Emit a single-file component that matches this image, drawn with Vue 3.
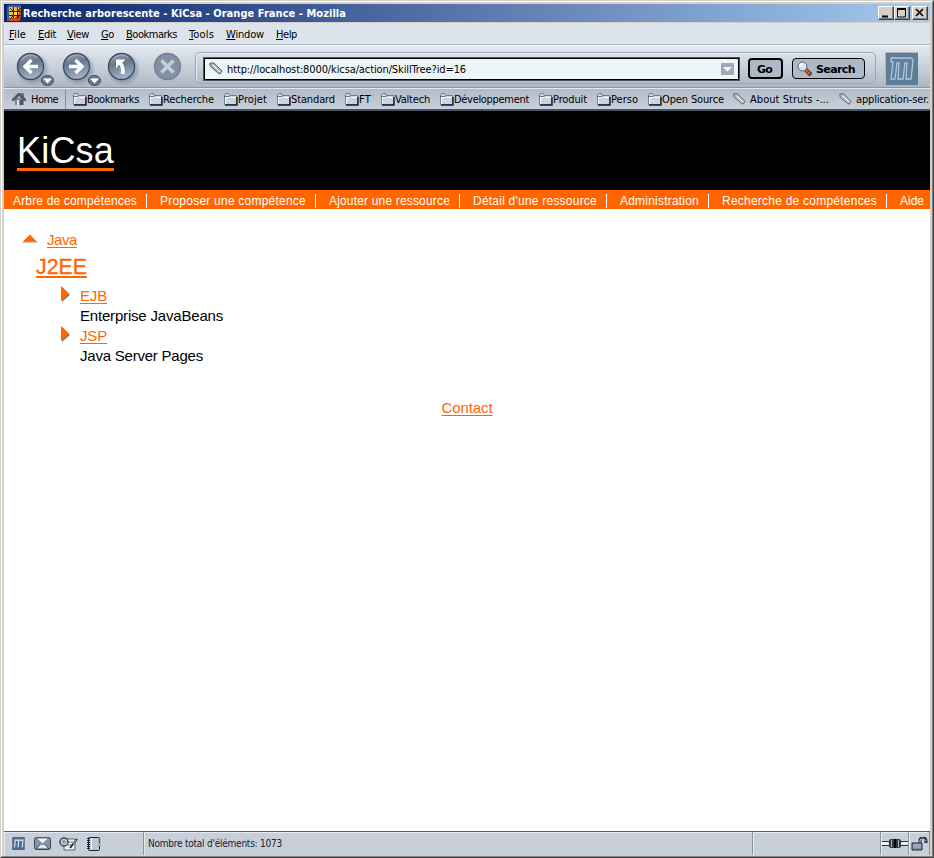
<script setup>
const menus = [
  ['File', 17, 12], ['Edit', 18, 11], ['View', 22, 12], ['Go', 13, 12],
  ['Bookmarks', 51, 12], ['Tools', 25, 12], ['Window', 38, 12], ['Help', 21, 0]
]
const bookmarks = [
  ['Bookmarks', 52], ['Recherche', 51], ['Projet', 29], ['Standard', 44], ['FT', 12],
  ['Valtech', 35], ['Développement', 75], ['Produit', 34], ['Perso', 27], ['Open Source', 62]
]
const pages = [['About Struts -...', 79], ['application-ser.', 73]]
const nav = [
  ['Arbre de compétences', 124], ['Proposer une compétence', 146], ['Ajouter une ressource', 121],
  ['Détail d\'une ressource', 124], ['Administration', 79], ['Recherche de compétences', 155], ['Aide', 24]
]
const skills = [
  { name: 'EJB', width: 27, text: 'Enterprise JavaBeans', textWidth: 143 },
  { name: 'JSP', width: 27, text: 'Java Server Pages', textWidth: 123 }
]
// Spreads the letters of a label over its column width.
const vFit = {
  mounted(el, { value }) {
    const natural = el.getBoundingClientRect().width
    el.style.letterSpacing = (value - natural) / el.textContent.trim().length + 'px'
    el.style.width = value + 'px'
  }
}
</script>

<template>
  <div class="window">
    <div class="frame">
      <header class="title">
        <svg class="logo" width="16" height="16" viewBox="0 0 16 16">
          <path d="M0 2 2 0h12v3H3v11l-1 2H0z" fill="#2a62a8" /><path d="M2 2h12v12l-2 2H2z" fill="#d9481c" />
          <path d="M2 2h10v6l-4 5H2z" fill="#f7b82c" />
          <path d="M6.500 2v12M10.500 2v12M2 6.500h13M2 10.500h13" stroke="#3a2410" fill="none" />
          <path d="m3 3 3 3M14 3l-3 3M3 14l3-3m8 3-3-3" stroke="#3a2410" />
          <path d="M7 7h3v3H7z" fill="#ffe34c" />
        </svg>
        <b v-fit="323" class="fit">Recherche arborescente - KiCsa - Orange France - Mozilla</b>
        <div class="controls">
          <i><svg width="14" height="12"><path d="M3 9.5h6" stroke="#000" stroke-width="2" /></svg></i>
          <i><svg width="14" height="12"><path d="M2.5 2v8h8V2" stroke="#000" fill="none" /><path d="M2 2h9" stroke="#000" stroke-width="2" /></svg></i>
          <i class="close"><svg width="14" height="12"><path d="m3 2 7 7M10 2 3 9" stroke="#000" stroke-width="1.6" /></svg></i>
        </div>
      </header>
      <nav class="menu">
        <span v-for="m in menus" :key="m[0]" v-fit="m[1]" class="fit" :style="{ marginRight: m[2] + 'px' }"><u>{{ m[0][0] }}</u>{{ m[0].slice(1) }}</span>
      </nav>
      <div class="toolbar">
        <svg class="buttons" width="190" height="43" viewBox="4 45 190 43">
          <defs>
            <linearGradient id="ball" x1="0" y1="0" x2="0.25" y2="1"><stop offset="0" stop-color="#97a4b4" /><stop offset=".45" stop-color="#68788c" /><stop offset="1" stop-color="#a0b0c2" /></linearGradient>
            <radialGradient id="shade"><stop offset=".7" stop-color="#65758a" stop-opacity=".45" /><stop offset="1" stop-color="#65758a" stop-opacity="0" /></radialGradient>
          </defs>
          <g v-for="x in [30.5, 76.5, 121.5]" :key="x">
            <circle :cx="x + 2" cy="69" r="17" fill="url(#shade)" />
            <circle :cx="x" cy="66.5" r="13" fill="url(#ball)" stroke="#3c4a60" stroke-width="1.3" />
            <path :d="`M${x - 9} 60a11 11 0 0 1 16 -3`" fill="none" stroke="#c6d0db" stroke-opacity=".6" />
          </g>
          <path d="M38 66.5H26M31.500 60l-6.500 6.500 6.500 6.500M69 66.500h12M75.500 60l6.500 6.500-6.500 6.500" fill="none" stroke="#fff" stroke-width="3.4" />
          <path d="M120 63q4 4 2.500 11" fill="none" stroke="#fff" stroke-width="3.8" />
          <path d="M116 59.500h9.500l-3 3-3.500 2-3 4z" fill="#fff" />
          <circle cx="167.500" cy="66.500" r="13" fill="#8290a3" stroke="#718096" stroke-width="1.3" />
          <path d="m161.500 60.500 12 12m0-12-12 12" stroke="#c5ced9" stroke-width="3.8" />
          <g v-for="x in [47.5, 94.5]" :key="x">
            <ellipse :cx="x" cy="80.500" rx="6" ry="5" fill="#6b7a8e" stroke="#37465b" />
            <path :d="`M${x - 4.5} 78.500h9l-4.500 5z`" fill="#fff" />
          </g>
        </svg>
        <div class="address">
          <div class="url">
            <svg width="14" height="14" viewBox="0 0 14 14"><path d="M1 1h4l8 8-2 3-2-1-8-7z" fill="#aeb7c1" stroke="#56616e" /><path d="m4 3 7 7" stroke="#fff" /></svg>
            <span v-fit="239" class="fit">http://localhost:8000/kicsa/action/SkillTree?id=16</span>
            <svg class="drop" width="13" height="12"><rect width="13" height="12" rx="1" fill="#9caaba" /><path d="M2 4h9L6.500 8.500z" fill="#fff" /></svg>
          </div>
          <button class="go"><span v-fit="15" class="fit">Go</span></button>
          <button class="search">
            <svg width="16" height="16" viewBox="0 0 16 16"><path d="m9 9 5 5" stroke="#74230d" stroke-width="4" /><path d="m9 9 4 4" stroke="#d4623b" stroke-width="2" /><circle cx="5.500" cy="5.500" r="4.500" fill="#d7e4ef" stroke="#546274" /><path d="M3 6q0-3 3-3" stroke="#fff" stroke-width="2" fill="none" /></svg>
            <span v-fit="39" class="fit">Search</span>
          </button>
        </div>
        <svg class="brand" width="33" height="34" viewBox="0 0 33 34">
          <rect width="33" height="34" fill="#adb8c3" /><rect x="1" y="1" width="32" height="32" fill="#617c97" />
          <path d="M6 6h19q3 0 3 3l-2 18h-5l1-16h-2l-2 16h-5l1-16h-2l-2 16H6L8 10H6z" fill="#647f9b" stroke="#adc7df" stroke-width="1.3" />
        </svg>
      </div>
      <div class="bookmarks">
        <div class="home">
          <svg width="15" height="14" viewBox="0 0 15 14"><path d="M9 1h3v5H9z" fill="#697787" /><path d="M3 6h9v7H3z" fill="#7b8897" /><path d="M0 7 6 1h2l6 6v2h-2L7 4 2 9H0z" fill="#4a5b6c" /><path d="M5 8h2v5H5z" fill="#dde4eb" /><path d="M8 8h3v5H8z" fill="#4a5867" /></svg>
          <span v-fit="27" class="fit">Home</span>
        </div>
        <div v-for="b in bookmarks" :key="b[0]" class="bookmark">
          <svg width="15" height="13" viewBox="0 0 15 13"><path d="M1.500 11.500v-10l1-1h3l1 2h7v9z" fill="#cbd2db" stroke="#6f7b8a" /><path d="M14 4v8H2" fill="none" stroke="#152136" stroke-width="1.400" /><path d="M2.500 11V4.500H13" fill="none" stroke="#fff" /><path d="M1 3.500h5l1 1" fill="none" stroke="#65717f" /></svg>
          <span v-fit="b[1]" class="fit">{{ b[0] }}</span>
        </div>
        <div v-for="p in pages" :key="p[0]" class="page-link">
          <svg width="13" height="13" viewBox="0 0 14 14"><path d="M1 1h4l8 8-2 3-2-1-8-7z" fill="#b9c1cb" stroke="#56616e" /><path d="m4 3 7 7" stroke="#fff" /></svg>
          <span v-fit="p[1]" class="fit">{{ p[0] }}</span>
        </div>
      </div>
      <main class="page">
        <div class="banner"><h1 v-fit="97" class="fit">KiCsa</h1></div>
        <nav class="site-nav"><a v-for="n in nav" :key="n[0]"><span v-fit="n[1]" class="fit">{{ n[0] }}</span></a></nav>
        <div class="content">
          <div class="parent">
            <svg width="16" height="12" viewBox="0 0 16 12"><path d="M0 10.500 8 3l8 7.500z" fill="#aaa18c" /><path d="m1 9.500 7-7 6 7z" fill="#f60" /></svg>
            <a v-fit="30" class="fit link">Java</a>
          </div>
          <h2><a v-fit="51" class="fit link">J2EE</a></h2>
          <div v-for="s in skills" :key="s.name" class="skill">
            <svg width="9" height="16" viewBox="0 0 9 16"><path d="M1 1v15l8-7z" fill="#827c75" /><path d="M0 0v15l8-7z" fill="#f60" /></svg>
            <div class="description"><a v-fit="s.width" class="fit link">{{ s.name }}</a><span v-fit="s.textWidth" class="fit">{{ s.text }}</span></div>
          </div>
          <div class="contact"><a v-fit="51" class="fit link">Contact</a></div>
        </div>
      </main>
      <footer class="status">
        <div class="components">
          <svg width="13" height="13" viewBox="0 0 33 34"><rect width="33" height="34" fill="#4d6c8d" /><path d="M6 8h22l-2 19M8 10 6 27M17 10l-2 17" stroke="#e0ebf5" stroke-width="3" fill="none" /></svg>
          <svg width="17" height="13" viewBox="0 0 17 13"><rect x=".5" y=".5" width="16" height="12" rx="2" fill="#8796a6" stroke="#364559" /><path d="m2 1 6.500 6L15 1z" fill="#f1f5f8" stroke="#6c7988" /><path d="M3 11 6 8h5l3 3z" fill="#dce4ec" /><path d="m2 12 4-5m5 0 4 5" stroke="#435165" /></svg>
          <svg width="20" height="14" viewBox="0 0 20 14"><path d="M5 2h11v11H5z" fill="#f4f5f6" stroke="#59636e" /><path d="M9 5h5M9 8h4" stroke="#65717e" /><circle cx="5" cy="5" r="4" fill="#c3cedb" stroke="#35465b" stroke-width="1.500" /><path d="M3 5h4M5 3v4" stroke="#6e7e90" /><path d="m11 11 7-9" stroke="#222f3f" stroke-width="2" /><path d="m14 7 3-4" stroke="#e9b657" /></svg>
          <svg width="15" height="14" viewBox="0 0 15 14"><rect x="2.500" y=".5" width="11" height="13" rx="1" fill="#bac6d3" stroke="#152034" /><path d="M2.500 1v12" stroke="#17243a" stroke-width="3" stroke-dasharray="1 1" /><path d="M13.500 2v3" stroke="#5083bb" stroke-width="2" /><path d="M13.500 6v3" stroke="#d4aa2d" stroke-width="2" /><path d="M5.500 1v12" stroke="#fff" /></svg>
        </div>
        <div class="message"><span v-fit="134" class="fit">Nombre total d'éléments: 1073</span></div>
        <div class="blank"></div>
        <div class="online"><svg width="26" height="11" viewBox="0 0 26 11"><path d="M0 3.500h8M0 7.500h8M18 3.500h8M18 7.500h8" stroke="#273342" /><path d="M0 5.500h8m10 0h8" stroke="#fff" stroke-width="2" /><rect x="7" y="1" width="12" height="9" rx="2" fill="#303b48" /><path d="M9.500 2v7m7-7v7" stroke="#aab5c0" /><path d="M13 1v9" stroke="#000" stroke-width="2" /></svg></div>
        <div class="lock"><svg width="17" height="14" viewBox="0 0 17 14"><path d="M9 6V3q0-2 3-2 3 0 3 3v2" fill="none" stroke="#243044" stroke-width="3" /><path d="M9 6V3q0-1 3-1 2 0 3 2" fill="none" stroke="#cad6e2" /><path d="M1 6h10v7H1z" fill="#7d8c9d" stroke="#202d40" /><path d="M2 8h8M2 10h8" stroke="#b6c2cf" /></svg></div>
      </footer>
    </div>
  </div>
</template>

<style>
body { margin: 0; overflow: hidden; }
</style>
<style scoped>
* { box-sizing: border-box; }
svg { display: block; flex: none; }
.window { height: 858px; border: 1px solid; border-color: #d4d0c8 #404040 #404040 #d4d0c8; font: 11px "DejaVu Sans Condensed", "DejaVu Sans", sans-serif; font-stretch: condensed; color: #000; }
.frame { height: 856px; border: 1px solid; border-color: #fff #808080 #808080 #fff; padding: 2px; background: #d4d0c8; display: flex; flex-direction: column; }
.fit { display: inline-block; white-space: nowrap; flex: none; }
.title { flex: none; height: 18px; display: flex; align-items: center; background: linear-gradient(90deg, #0a246a, #a6caf0); color: #fff; margin-bottom: 1px; padding: 0 2px 0 3px; }
.controls { margin-left: auto; display: flex; }
.controls i { width: 16px; height: 14px; background: #d4d0c8; border: 1px solid; border-color: #fff #404040 #404040 #fff; box-shadow: inset -1px -1px #808080; }
.controls .close { margin-left: 2px; }
.menu { flex: none; height: 22px; display: flex; align-items: center; padding: 1px 0 0 5px; background: #dde3eb; border-bottom: 1px solid #a9b6c5; }
.menu u { text-underline-offset: 1px; }
.toolbar { flex: none; height: 43px; display: flex; background: linear-gradient(#e5e9f0 0, #d6dde6 25%, #acb7c5 100%); border-top: 1px solid #f4f7fa; border-bottom: 1px solid #8996a6; }
.buttons { margin-top: -1px; }
.address { margin: 6px 0 4px 1px; width: 681px; height: 32px; border: 1px solid #99a8b8; border-radius: 5px; box-shadow: inset 1px 1px #e8edf2; display: flex; align-items: center; padding-left: 8px; }
.url { width: 535px; height: 22px; margin-top: 1px; border: 1px solid #000; outline: 1px solid #4a5668; background: #edf5f7; display: flex; align-items: center; padding: 0 4px; }
.url .fit { margin-left: 4px; padding-top: 2px; }
.drop { margin-left: auto; }
button { font: bold 11px "DejaVu Sans", sans-serif; background: #aeb9c8; border: 1px solid #000; border-radius: 4px; color: #000; padding: 2px 0 0; display: flex; align-items: center; justify-content: center; }
.go { width: 35px; height: 21px; border-width: 2px; margin: 1px 0 0 9px; padding-right: 2px; }
.search { width: 73px; height: 21px; margin: 1px 0 0 9px; gap: 3px; padding-right: 5px; }
.search svg { margin-top: -2px; }
.brand { margin: 6px 0 0 9px; }
.bookmarks { flex: none; height: 23px; overflow: hidden; display: flex; align-items: center; background: linear-gradient(#b1bcc8, #c8d0da); border-top: 1px solid #e2e8ee; border-bottom: 2px solid #4a5462; }
.home { height: 20px; width: 62px; display: flex; align-items: center; gap: 4px; padding-left: 8px; border-right: 1px solid #8290a0; margin-right: 6px; flex: none; }
.bookmark { display: flex; align-items: center; margin-right: 9px; flex: none; }
.page-link { display: flex; align-items: center; gap: 4px; margin-right: 10px; flex: none; }
.page { flex: 1; min-height: 0; background: #fff; font-family: "Liberation Sans", Arial, sans-serif; font-stretch: normal; }
.banner { height: 79px; background: #000; padding: 15px 0 0 13px; }
h1 { margin: 0; color: #fff; font-size: 36px; font-weight: 400; line-height: 50px; height: 45px; border-bottom: 3px solid #f60; }
.site-nav { height: 19px; background: #f60; color: #fff; font-size: 12px; display: flex; align-items: center; padding: 2px 0 0 9px; overflow: hidden; }
.site-nav a { display: flex; flex: none; height: 14px; line-height: 14px; }
.site-nav a:not(:last-child) { border-right: 1px solid #fff; padding-right: 9px; margin-right: 13px; }
.content { padding-top: 21px; font-size: 15px; line-height: 20px; }
.link { color: #f60; text-decoration: underline; text-decoration-thickness: 1px; text-underline-offset: 2px; }
.parent { height: 20px; display: flex; padding-left: 18px; gap: 9px; }
.parent svg { margin-top: 2px; }
h2 { margin: 2px 0 4px 32px; font-size: 21.300px; line-height: 30px; height: 30px; font-weight: 400; }
h2 .link { text-decoration-thickness: 2px; -webkit-text-stroke: .3px #f60; }
.skill { display: flex; gap: 10px; padding-left: 57px; height: 40px; }
.description { display: flex; flex-direction: column; align-items: flex-start; }
.contact { margin-top: 32px; text-align: center; }
.status { flex: none; height: 24px; display: flex; background: #c8cfd9; border-top: 1px solid #536070; margin-bottom: -1px; font-size: 10px; color: #18212d; }
.status > div { display: flex; align-items: center; border-right: 1px solid #8593a3; box-shadow: inset 1px 1px #e6ebf1; }
.components { width: 140px; padding-left: 8px; gap: 9px; }
.components svg:nth-child(3) { margin-left: -1px; }
.components svg:nth-child(4) { margin-left: -2px; }
.message { width: 609px; padding-left: 4px; }
.blank { width: 128px; }
.online { width: 28px; justify-content: center; }
.lock { flex: 1; justify-content: center; }
</style>
